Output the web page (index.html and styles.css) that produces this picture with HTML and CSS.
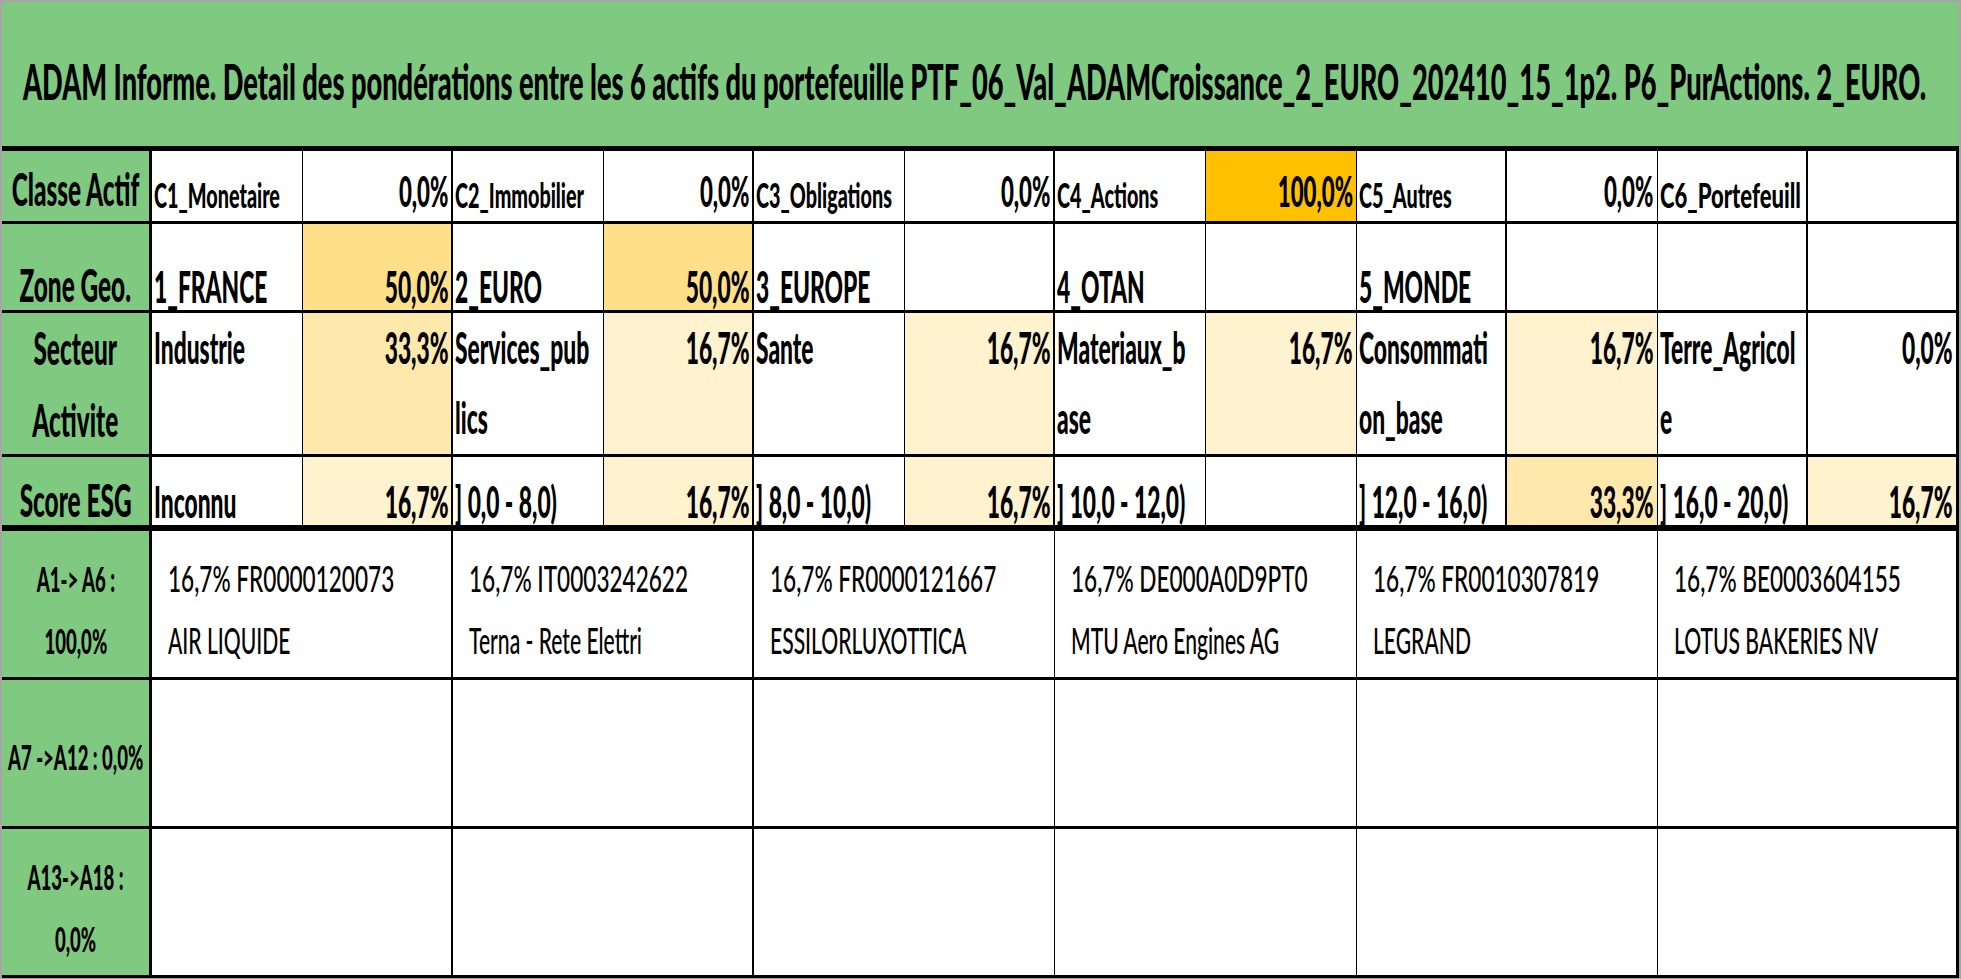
FILE: index.html
```html
<!DOCTYPE html>
<html lang="fr">
<head>
<meta charset="utf-8">
<title>ADAM Informe</title>
<link rel="stylesheet" href="styles.css">
</head>
<body>
<div class="frame">
  <div class="title"><span class="t">ADAM Informe. Detail des pondérations entre les 6 actifs du portefeuille PTF_06_Val_ADAMCroissance_2_EURO_202410_15_1p2. P6_PurActions. 2_EURO.</span></div>
  <div class="sheet">
    <!-- Row 1 -->
    <div class="cell lab row1"><span class="t">Classe Actif</span></div>
    <div class="cell name row1"><span class="t">C1_Monetaire</span></div>
    <div class="cell val row1 b2"><span class="t">0,0%</span></div>
    <div class="cell name row1"><span class="t">C2_Immobilier</span></div>
    <div class="cell val row1 b2"><span class="t">0,0%</span></div>
    <div class="cell name row1"><span class="t">C3_Obligations</span></div>
    <div class="cell val row1 b2"><span class="t">0,0%</span></div>
    <div class="cell name row1"><span class="t">C4_Actions</span></div>
    <div class="cell val row1 f100"><span class="t">100,0%</span></div>
    <div class="cell name row1 b2"><span class="t">C5_Autres</span></div>
    <div class="cell val row1"><span class="t">0,0%</span></div>
    <div class="cell name row1 b2"><span class="t wide">C6_Portefeuill</span></div>
    <div class="cell val row1 b3"></div>

    <!-- Row 2 -->
    <div class="cell lab row2"><span class="t">Zone Geo.</span></div>
    <div class="cell name row2"><span class="t">1_FRANCE</span></div>
    <div class="cell val row2 b2 f50"><span class="t">50,0%</span></div>
    <div class="cell name row2"><span class="t">2_EURO</span></div>
    <div class="cell val row2 b2 f50"><span class="t">50,0%</span></div>
    <div class="cell name row2"><span class="t">3_EUROPE</span></div>
    <div class="cell val row2 b2"></div>
    <div class="cell name row2"><span class="t">4_OTAN</span></div>
    <div class="cell val row2"></div>
    <div class="cell name row2 b2"><span class="t">5_MONDE</span></div>
    <div class="cell val row2"></div>
    <div class="cell name row2 b2"></div>
    <div class="cell val row2 b3"></div>

    <!-- Row 3 -->
    <div class="cell lab row3"><span class="t">Secteur<br>Activite</span></div>
    <div class="cell name row3"><span class="t">Industrie</span></div>
    <div class="cell val row3 b2 f33"><span class="t">33,3%</span></div>
    <div class="cell name row3"><span class="t">Services_pub<br>lics</span></div>
    <div class="cell val row3 b2 f17"><span class="t">16,7%</span></div>
    <div class="cell name row3"><span class="t">Sante</span></div>
    <div class="cell val row3 b2 f17"><span class="t">16,7%</span></div>
    <div class="cell name row3"><span class="t">Materiaux_b<br>ase</span></div>
    <div class="cell val row3 f17"><span class="t">16,7%</span></div>
    <div class="cell name row3 b2"><span class="t">Consommati<br>on_base</span></div>
    <div class="cell val row3 f17"><span class="t">16,7%</span></div>
    <div class="cell name row3 b2"><span class="t">Terre_Agricol<br>e</span></div>
    <div class="cell val row3 b3"><span class="t">0,0%</span></div>

    <!-- Row 4 -->
    <div class="cell lab row4"><span class="t">Score ESG</span></div>
    <div class="cell name row4"><span class="t">Inconnu</span></div>
    <div class="cell val row4 b2 f17"><span class="t">16,7%</span></div>
    <div class="cell name row4"><span class="t">] 0,0 - 8,0)</span></div>
    <div class="cell val row4 b2 f17"><span class="t">16,7%</span></div>
    <div class="cell name row4"><span class="t">] 8,0 - 10,0)</span></div>
    <div class="cell val row4 b2 f17"><span class="t">16,7%</span></div>
    <div class="cell name row4"><span class="t">] 10,0 - 12,0)</span></div>
    <div class="cell val row4"></div>
    <div class="cell name row4 b2"><span class="t">] 12,0 - 16,0)</span></div>
    <div class="cell val row4 f33"><span class="t">33,3%</span></div>
    <div class="cell name row4 b2"><span class="t">] 16,0 - 20,0)</span></div>
    <div class="cell val row4 b3 f17"><span class="t">16,7%</span></div>

    <!-- Row 5 -->
    <div class="cell lab lab-sm"><span class="t">A1-&gt; A6 :<br>100,0%</span></div>
    <div class="cell asset b2"><span class="t l1">16,7% FR0000120073</span><span class="t l2">AIR LIQUIDE</span></div>
    <div class="cell asset b2"><span class="t l1">16,7% IT0003242622</span><span class="t l2">Terna - Rete Elettri</span></div>
    <div class="cell asset"><span class="t l1">16,7% FR0000121667</span><span class="t l2">ESSILORLUXOTTICA</span></div>
    <div class="cell asset"><span class="t l1">16,7% DE000A0D9PT0</span><span class="t l2">MTU Aero Engines AG</span></div>
    <div class="cell asset"><span class="t l1">16,7% FR0010307819</span><span class="t l2">LEGRAND</span></div>
    <div class="cell asset b3"><span class="t l1">16,7% BE0003604155</span><span class="t l2">LOTUS BAKERIES NV</span></div>

    <!-- Row 6 -->
    <div class="cell lab lab-sm lab-one"><span class="t">A7 -&gt;A12 : 0,0%</span></div>
    <div class="cell asset b2"></div>
    <div class="cell asset b2"></div>
    <div class="cell asset"></div>
    <div class="cell asset"></div>
    <div class="cell asset"></div>
    <div class="cell asset b3"></div>

    <!-- Row 7 -->
    <div class="cell lab lab-sm"><span class="t">A13-&gt;A18 :<br>0,0%</span></div>
    <div class="cell asset b2"></div>
    <div class="cell asset b2"></div>
    <div class="cell asset"></div>
    <div class="cell asset"></div>
    <div class="cell asset"></div>
    <div class="cell asset b3"></div>
  </div>
</div>
</body>
</html>
```
FILE: styles.css
```css
* {
  box-sizing: border-box;
  margin: 0;
  padding: 0;
}

html, body {
  background: #ffffff;
}

body {
  margin: 0;
  font-family: Lato, "Open Sans", "DejaVu Sans", sans-serif;
  color: #000000;
  overflow: hidden;
  --sx: 0.53;
  --green: #80c980;
}

.frame {
  width: 1961px;
  height: 979px;
  border: 2px solid #a6a6a6;
  border-bottom-width: 1px;
  display: flex;
  flex-direction: column;
  overflow: hidden;
}

.t {
  display: inline-block;
  white-space: nowrap;
  transform: scaleX(var(--sx));
  transform-origin: 0 50%;
}

.title {
  height: 149px;
  flex: 0 0 149px;
  background: var(--green);
  border-bottom: 5px solid #000000;
  display: flex;
  align-items: flex-end;
  padding: 0 0 40px 21px;
  font-weight: 900;
  font-size: 50px;
  line-height: 1;
  --sx: 0.544;
}

.sheet {
  flex: 1 1 auto;
  display: grid;
  grid-template-columns: 150px repeat(12, 1fr);
  grid-template-rows: 73px 89px 144px 74px 149px 149px 149px;
}

.cell {
  border-bottom: 3px solid #000000;
  border-right: 1px solid #000000;
  overflow: hidden;
  display: flex;
  line-height: 1;
  font-weight: 900;
  font-size: 43px;
  min-width: 0;
}

.b2 { border-right-width: 2px; }
.b3 { border-right-width: 3px; }

.lab {
  background: var(--green);
  border-right-width: 3px;
  justify-content: center;
  text-align: center;
  font-size: 46px;
}

.lab .t {
  transform-origin: 50% 50%;
}

.name {
  justify-content: flex-start;
  padding-left: 2px;
}

.val {
  justify-content: flex-end;
  padding-right: 3px;
}

.val .t {
  transform-origin: 100% 50%;
}

.f100 { background: #ffc000; }
.f50 { background: #ffdf88; }
.f33 { background: #ffe8ac; }
.f17 { background: #fff2cf; }

/* Row 1 : Classe Actif */
.row1 {
  align-items: flex-end;
  padding-bottom: 9px;
}
.row1.name {
  font-size: 35px;
  padding-bottom: 9px;
  --sx: 0.565;
}
.row1.name .wide {
  --sx: 0.63;
}
.row1.val {
  font-size: 42px;
}

/* Row 2 : Zone Geo */
.row2 {
  align-items: flex-end;
  padding-bottom: 2px;
}

/* Row 3 : Secteur Activite */
.row3 {
  align-items: flex-start;
  line-height: 70px;
}
.row3.lab {
  align-items: center;
  line-height: 72px;
}

/* Row 4 : Score ESG */
.row4 {
  align-items: flex-end;
  padding-bottom: 2px;
  border-bottom-width: 6px;
}

/* Bottom rows : assets */
.asset {
  grid-column: span 2;
  flex-direction: column;
  align-items: flex-start;
  justify-content: flex-start;
  padding: 16px 0 0 16px;
  font-weight: 500;
  font-size: 37px;
  line-height: 62px;
}

.asset .l1 {
  --sx: 0.61;
}

.asset .l2 {
  --sx: 0.57;
}

.lab-sm {
  align-items: flex-start;
  padding-top: 16px;
  font-size: 35px;
  line-height: 62px;
}

.lab-one {
  padding-top: 45px;
}
```
